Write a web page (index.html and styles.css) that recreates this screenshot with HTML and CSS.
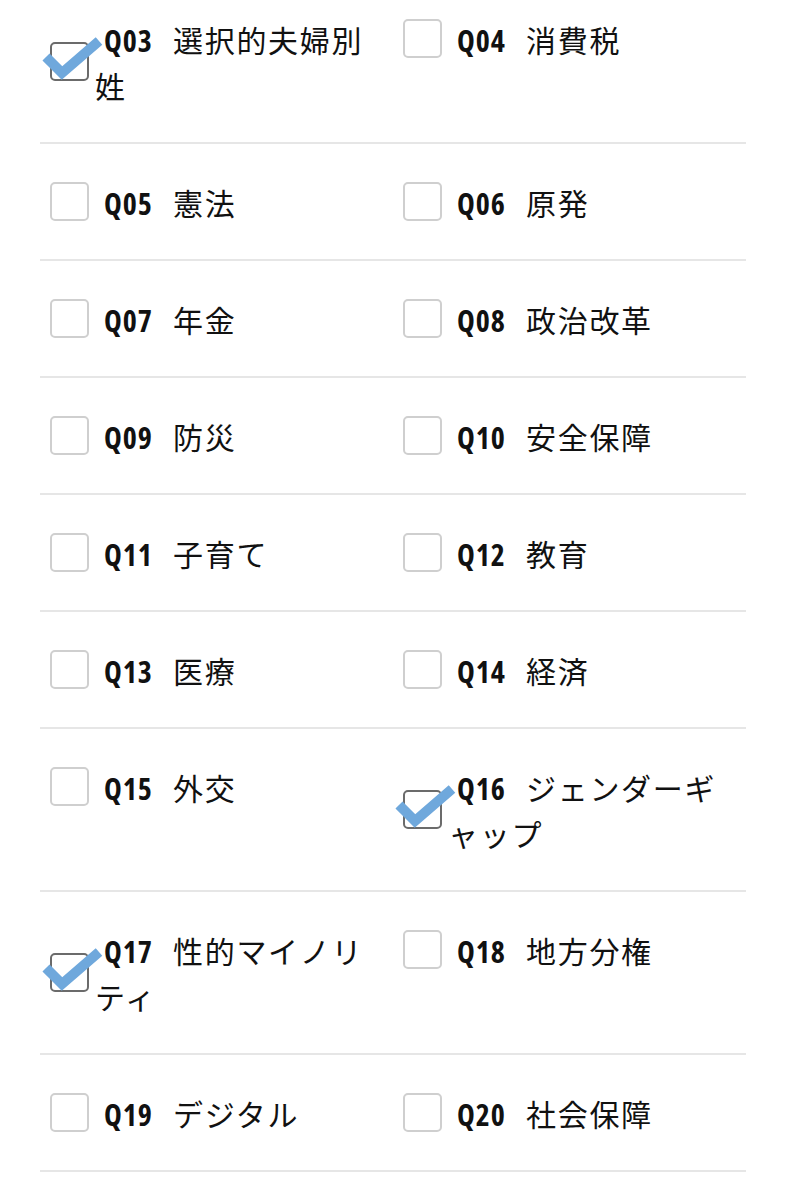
FILE: index.html
```html
<!DOCTYPE html>
<html lang="ja">
<head>
<meta charset="utf-8">
<link rel="stylesheet" href="styles.css">
</head>
<body>
<div class="list">
  <div class="row">
    <label class="item checked"><span class="box"><svg class="tick" viewBox="0 0 60 44"><polyline points="2,18 18,34 55,2"/></svg></span><span class="txt"><span class="q">Q03</span>選択的夫婦別姓</span></label>
    <label class="item"><span class="box"></span><span class="txt"><span class="q">Q04</span>消費税</span></label>
  </div>
  <div class="row">
    <label class="item"><span class="box"></span><span class="txt"><span class="q">Q05</span>憲法</span></label>
    <label class="item"><span class="box"></span><span class="txt"><span class="q">Q06</span>原発</span></label>
  </div>
  <div class="row">
    <label class="item"><span class="box"></span><span class="txt"><span class="q">Q07</span>年金</span></label>
    <label class="item"><span class="box"></span><span class="txt"><span class="q">Q08</span>政治改革</span></label>
  </div>
  <div class="row">
    <label class="item"><span class="box"></span><span class="txt"><span class="q">Q09</span>防災</span></label>
    <label class="item"><span class="box"></span><span class="txt"><span class="q">Q10</span>安全保障</span></label>
  </div>
  <div class="row">
    <label class="item"><span class="box"></span><span class="txt"><span class="q">Q11</span>子育て</span></label>
    <label class="item"><span class="box"></span><span class="txt"><span class="q">Q12</span>教育</span></label>
  </div>
  <div class="row">
    <label class="item"><span class="box"></span><span class="txt"><span class="q">Q13</span>医療</span></label>
    <label class="item"><span class="box"></span><span class="txt"><span class="q">Q14</span>経済</span></label>
  </div>
  <div class="row">
    <label class="item"><span class="box"></span><span class="txt"><span class="q">Q15</span>外交</span></label>
    <label class="item checked"><span class="box"><svg class="tick" viewBox="0 0 60 44"><polyline points="2,18 18,34 55,2"/></svg></span><span class="txt"><span class="q">Q16</span>ジェンダーギャップ</span></label>
  </div>
  <div class="row">
    <label class="item checked"><span class="box"><svg class="tick" viewBox="0 0 60 44"><polyline points="2,18 18,34 55,2"/></svg></span><span class="txt"><span class="q">Q17</span>性的マイノリティ</span></label>
    <label class="item"><span class="box"></span><span class="txt"><span class="q">Q18</span>地方分権</span></label>
  </div>
  <div class="row">
    <label class="item"><span class="box"></span><span class="txt"><span class="q">Q19</span>デジタル</span></label>
    <label class="item"><span class="box"></span><span class="txt"><span class="q">Q20</span>社会保障</span></label>
  </div>
</div>
</body>
</html>
```

FILE: styles.css
```css
html, body {
  margin: 0;
  padding: 0;
  background: #ffffff;
}
body {
  font-family: "Noto Sans CJK JP", "Noto Sans", sans-serif;
  color: #111111;
}
.list {
  margin: -19px 40px 0 40px;
}
.row {
  display: grid;
  grid-template-columns: 1fr 1fr;
  align-items: start;
  padding: 34.5px 0;
  border-bottom: 2px solid #e6e6e6;
}
.item {
  display: flex;
  align-items: center;
}
.box {
  position: relative;
  flex: none;
  box-sizing: border-box;
  width: 39px;
  height: 39px;
  margin-left: 10px;
  border: 2px solid #cfcfcf;
  border-radius: 5px;
  background: #ffffff;
}
.txt {
  margin-left: 15px;
  font-size: 30px;
  line-height: 46px;
  letter-spacing: 1.7px;
  line-break: normal;
}
.q {
  display: inline-block;
  width: 50px;
  margin-right: 19px;
  line-height: 30px;
  white-space: nowrap;
  text-indent: 0;
  font-family: "Open Sans", sans-serif;
  font-stretch: 75%;
  font-weight: 700;
  font-size: 30px;
  letter-spacing: 1px;
}
.checked .box {
  border-color: #6b6b6b;
}
.checked .txt {
  margin-left: 6px;
  text-indent: 9px;
}
.tick {
  position: absolute;
  left: -8px;
  top: -5px;
  width: 60px;
  height: 44px;
  overflow: visible;
}
.tick polyline {
  fill: none;
  stroke: #6fa8dc;
  stroke-width: 10;
  stroke-linecap: butt;
  stroke-linejoin: miter;
}
```
